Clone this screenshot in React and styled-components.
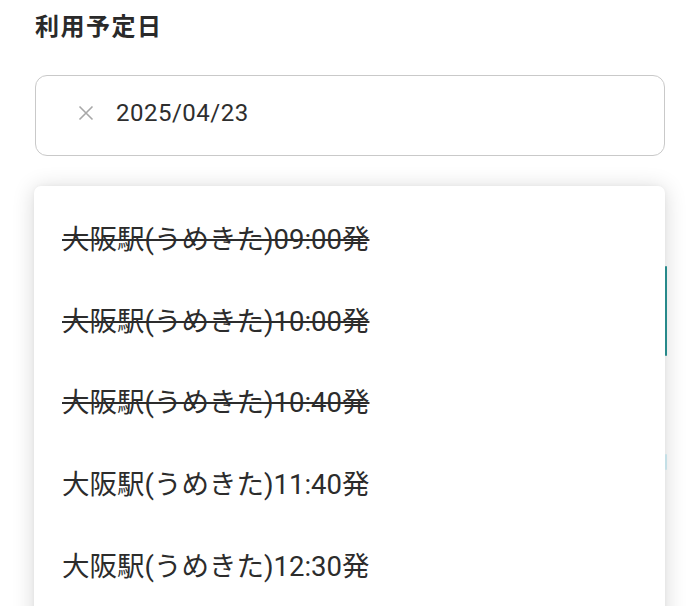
import React from "react";
import styled, { createGlobalStyle } from "styled-components";

const Global = createGlobalStyle`
  html, body { margin: 0; padding: 0; background: #ffffff; }
  body { font-family: Roboto, "Noto Sans CJK JP", sans-serif; color: #2e2e2e; }
`;

const Page = styled.div`
  width: 700px;
  height: 606px;
  overflow: hidden;
  box-sizing: border-box;
  padding: 12px 35px 0 35px;
  display: flex;
  flex-direction: column;
`;

const Label = styled.h2`
  margin: 0;
  font-family: Roboto, "Noto Sans CJK JP", sans-serif;
  font-weight: 700;
  font-size: 24px;
  line-height: 30px;
  color: #2a2a2a;
  letter-spacing: 1.5px;
`;

const DateField = styled.div`
  margin-top: 33px;
  height: 81px;
  flex: none;
  box-sizing: border-box;
  border: 1.5px solid #c9c9c9;
  border-radius: 12px;
  display: flex;
  align-items: center;
  padding-left: 42px;
  padding-bottom: 5px;
  gap: 22px;
`;

const ClearIcon = styled.svg`
  width: 16px;
  height: 16px;
  flex: none;
`;

const DateText = styled.span`
  font-size: 24px;
  color: #2e2e2e;
  letter-spacing: 0.5px;
`;

const Menu = styled.ul`
  position: relative;
  list-style: none;
  margin: 30px 0 0 -1px;
  padding: 10px 0 40px 0;
  background: #ffffff;
  border-radius: 7px;
  box-shadow: 0 2px 22px rgba(0, 0, 0, 0.16), 0 0 4px rgba(0, 0, 0, 0.04);
  flex: none;
`;

const Item = styled.li`
  height: 81.75px;
  display: flex;
  align-items: center;
  padding-left: 28px;
  font-size: 27.5px;
  color: #2c2c2c;
  text-decoration: ${(p) => (p.$disabled ? "line-through" : "none")};
  text-decoration-thickness: 2px;
`;

const ScrollMark = styled.span`
  position: absolute;
  right: -2px;
  top: ${(p) => p.$top}px;
  height: ${(p) => p.$h}px;
  width: 2.5px;
  border-radius: 1px;
  background: ${(p) => p.$color};
`;

const items = [
  { t: "大阪駅(うめきた)09:00発", d: true },
  { t: "大阪駅(うめきた)10:00発", d: true },
  { t: "大阪駅(うめきた)10:40発", d: true },
  { t: "大阪駅(うめきた)11:40発", d: false },
  { t: "大阪駅(うめきた)12:30発", d: false },
];

export default function App() {
  return (
    <>
      <Global />
      <Page>
        <Label>利用予定日</Label>
        <DateField>
          <ClearIcon viewBox="0 0 16 16">
            <path d="M1.5 1.5 L14.5 14.5 M14.5 1.5 L1.5 14.5" stroke="#a8a8a8" strokeWidth="1.6" fill="none" />
          </ClearIcon>
          <DateText>2025/04/23</DateText>
        </DateField>
        <Menu>
          {items.map((it, i) => (
            <Item key={i} $disabled={it.d}>{it.t}</Item>
          ))}
          <ScrollMark $top={80} $h={90} $color="#27898a" />
          <ScrollMark $top={268} $h={16} $color="#c4dfe6" />
        </Menu>
      </Page>
    </>
  );
}
